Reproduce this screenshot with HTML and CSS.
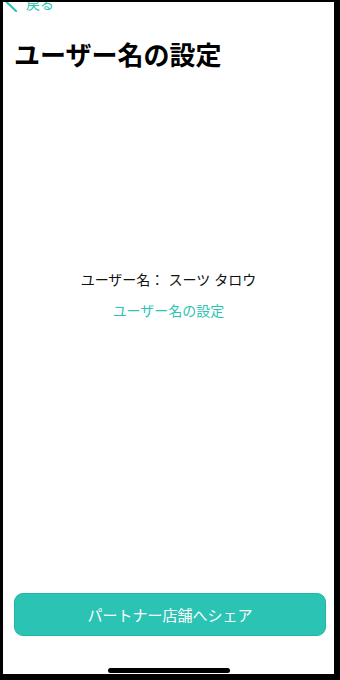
FILE: index.html
```html
<!DOCTYPE html>
<html>
<head>
    <meta charset="utf-8">
    <link rel="stylesheet" href="styles.css">
</head>

<body>
    <div class="screen">
        <nav class="nav">
            <svg class="back-icon" viewBox="0 0 16 20" width="16" height="20">
                <path d="M13 1 L3.5 10 L13 19"></path>
            </svg>
            <span class="back-label">戻る</span>
        </nav>
        <h1 class="title">ユーザー名の設定</h1>
        <section class="profile">
            <p class="username">ユーザー名： スーツ タロウ</p>
            <a class="setting-link">ユーザー名の設定</a>
        </section>
        <button class="share-btn">パートナー店舗へシェア</button>
        <div class="home-bar"></div>
    </div>
</body>
</html>
```

FILE: styles.css
```css
body {
    margin: 0;
    font-family: "Noto Sans CJK JP", "Noto Sans", sans-serif;
    color: #000;
}
.screen {
    width: 340px;
    height: 680px;
    box-sizing: border-box;
    border-style: solid;
    border-color: #000;
    border-width: 2px 6px 6px 3px;
    background: #fff;
    display: flex;
    flex-direction: column;
    overflow: hidden;
}

.nav {
    height: 10px;
    display: flex;
    align-items: flex-end;
}
.back-icon {
    flex: none;
    fill: none;
    stroke: #2cc4b4;
    stroke-width: 2.2px;
    stroke-linecap: round;
    stroke-linejoin: round;
}
.back-label {
    margin-left: 7px;
    margin-bottom: 2px;
    font-size: 14px;
    line-height: 14px;
    color: #2cc4b4;
}

.title {
    margin: 29px 0 0;
    padding-left: 11px;
    font-size: 26px;
    line-height: 26px;
    font-weight: 700;
}

.profile {
    margin-top: 202px;
    display: flex;
    flex-direction: column;
    align-items: center;
    font-size: 14px;
    line-height: 20px;
}
.username {
    margin: 0;
    color: #111;
    word-spacing: 1px;
}
.setting-link {
    margin-top: 11px;
    color: #2cc4b4;
}

.share-btn {
    margin: auto 8px 0 11px;
    height: 43px;
    border: 1px solid #21b5a5;
    border-radius: 9px;
    background: #2bc3b3;
    color: #fff;
    font-family: inherit;
    font-size: 15px;
}

.home-bar {
    align-self: center;
    width: 122px;
    height: 5px;
    margin: 32px 0 1px;
    border-radius: 3px;
    background: #000;
}
```
